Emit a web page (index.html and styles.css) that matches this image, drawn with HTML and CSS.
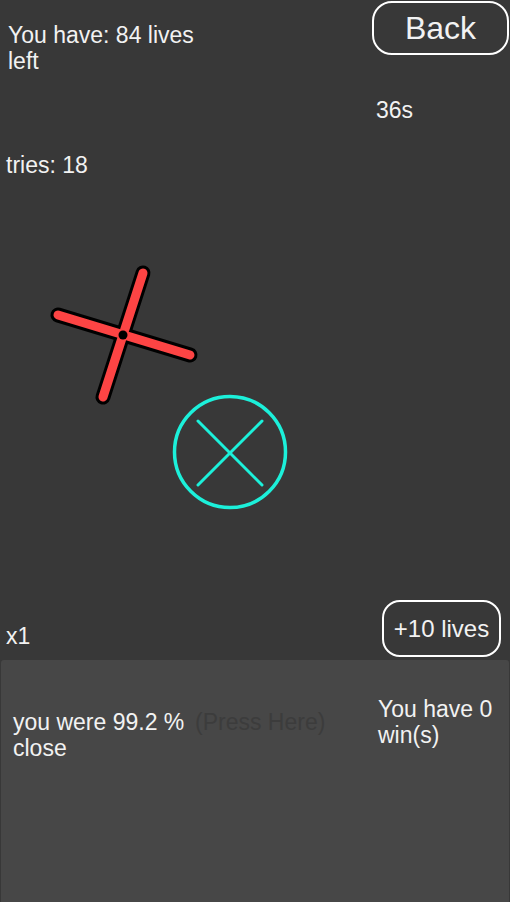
FILE: index.html
```html
<!DOCTYPE html>
<html>
<head>
<meta charset="utf-8">
<link rel="stylesheet" href="styles.css">
</head>
<body>
<div class="stage">
  <svg class="canvas" width="510" height="660" viewBox="0 0 510 660">
    <g stroke-linecap="round">
      <line x1="143" y1="273" x2="103" y2="397" stroke="#000" stroke-width="15"/>
      <line x1="58" y1="315" x2="190" y2="355" stroke="#000" stroke-width="15"/>
      <line x1="143" y1="273" x2="103" y2="397" stroke="#fd4444" stroke-width="9"/>
      <line x1="58" y1="315" x2="190" y2="355" stroke="#fd4444" stroke-width="9"/>
      <circle cx="123" cy="335" r="4.5" fill="#000"/>
    </g>
    <g stroke="#1cf0da" fill="none" stroke-linecap="round">
      <circle cx="230" cy="452" r="55.5" stroke-width="3.5"/>
      <line x1="198" y1="421" x2="262" y2="485" stroke-width="3"/>
      <line x1="262" y1="421" x2="198" y2="485" stroke-width="3"/>
    </g>
  </svg>
  <div class="top">
    <div class="lives">You have: 84 lives<br>left</div>
    <div class="right">
      <div class="back">Back</div>
      <div class="timer">36s</div>
    </div>
  </div>
  <div class="tries">tries: 18</div>
  <div class="spacer"></div>
  <div class="bottom-row">
    <div class="mult">x1</div>
    <div class="plus">+10 lives</div>
  </div>
</div>
<div class="panel">
  <div class="close-text">you were 99.2 %<br>close</div>
  <div class="press">(Press Here)</div>
  <div class="wins">You have 0<br>win(s)</div>
</div>
</body>
</html>
```
FILE: styles.css
```css
html, body {
  margin: 0;
  padding: 0;
}
body {
  width: 510px;
  height: 902px;
  overflow: hidden;
  background: #383838;
  color: #f2f2f2;
  font-family: "Liberation Sans", Arial, sans-serif;
  font-size: 23px;
  line-height: 26px;
}
.stage {
  position: relative;
  height: 660px;
  display: flex;
  flex-direction: column;
}
.canvas {
  position: absolute;
  left: 0;
  top: 0;
}
.top {
  display: flex;
  justify-content: space-between;
}
.lives {
  margin-top: 22px;
  padding-left: 8px;
}
.right {
  width: 138px;
  padding-top: 1px;
}
.back {
  box-sizing: border-box;
  width: 137px;
  height: 54px;
  border: 2px solid #fff;
  border-radius: 20px;
  font-size: 32px;
  line-height: 50px;
  text-align: center;
}
.timer {
  margin-top: 42px;
  padding-left: 4px;
}
.tries {
  margin-top: 29px;
  padding-left: 6px;
}
.spacer {
  flex: 1;
}
.bottom-row {
  display: flex;
  justify-content: space-between;
  align-items: flex-end;
  padding: 0 9px 3px 6px;
}
.mult {
  margin-bottom: 8px;
}
.plus {
  box-sizing: border-box;
  width: 119px;
  height: 57px;
  border: 2px solid #fff;
  border-radius: 18px;
  font-size: 24px;
  line-height: 53px;
  text-align: center;
}
.panel {
  box-sizing: border-box;
  height: 242px;
  margin: 0 1px;
  background: #474747;
  border-radius: 3px 3px 0 0;
  display: flex;
  position: relative;
}
.close-text {
  margin-top: 49px;
  padding-left: 12px;
  width: 182px;
}
.press {
  margin-top: 49px;
  color: #3c3c3c;
}
.wins {
  margin-top: 36px;
  margin-left: auto;
  width: 131px;
}
```
